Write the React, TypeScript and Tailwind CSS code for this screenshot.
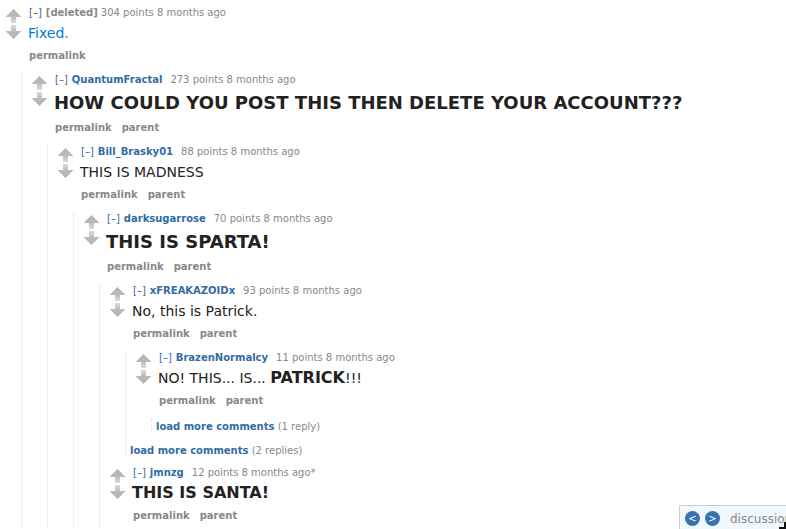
import React from "react";

type CommentProps = {
  author: string;
  meta: string;
  body: React.ReactNode;
  tall?: boolean;
  root?: boolean;
  children?: React.ReactNode;
};

function Arrow({ down = false }: { down?: boolean }) {
  const id = down ? "fade-down" : "fade-up";
  return (
    <svg width="15" height="14" viewBox="0 0 15 14" className={down ? "rotate-180" : ""} shapeRendering="crispEdges">
      <defs>
        <linearGradient id={id} x1="0" y1="0" x2="0" y2="1">
          <stop offset="0.5" stopColor="#b8b8b8" />
          <stop offset="1" stopColor="#dcdcdc" />
        </linearGradient>
      </defs>
      <path d="M7 0H8V1H9V2H10V3H11V4H12V5H13V6H14V7H15V8H10V14H5V8H0V7H1V6H2V5H3V4H4V3H5V2H6V1H7Z" fill={`url(#${id})`} />
    </svg>
  );
}

function Thread({ children }: { children: React.ReactNode }) {
  return <div className="mt-[11px] ml-[21px] border-l border-dotted border-[#ddddff] pl-1">{children}</div>;
}

function Comment({ author, meta, body, tall, root, children }: CommentProps) {
  return (
    <div>
      <div className="flex">
        <div className="ml-1.5 flex w-[15px] shrink-0 flex-col gap-0.5 pt-0.5">
          <Arrow />
          <Arrow down />
        </div>
        <div className="ml-[7px]">
          <div className="flex h-3 items-center pl-px leading-3 whitespace-pre text-[#888888]">
            <span className="text-[#336ba3]">[–]</span>
            <b className={root ? "ml-1" : "ml-1 text-[#336ba3]"}>{author}</b>
            <span className={root ? "ml-[3px]" : "ml-2"}>{meta}</span>
          </div>
          <div className={`whitespace-pre text-[#222222] ${tall ? "h-[34px] leading-[34px]" : "h-[29px] leading-7"}`}>{body}</div>
          <div className="flex h-[15px] gap-2.5 pl-px leading-4 font-bold text-[#888888]">
            <span>permalink</span>
            {!root && <span>parent</span>}
          </div>
        </div>
      </div>
      {children}
    </div>
  );
}

function LoadMore({ count }: { count: string }) {
  return (
    <div className="h-3.5 leading-4 whitespace-pre text-[#888888]">
      <b className="text-[#336ba3]">load more comments</b> {count}
    </div>
  );
}

export default function App() {
  return (
    <div className="relative h-[529px] w-[786px] overflow-hidden bg-white pt-[7px] font-['DejaVu_Sans',sans-serif] text-[10px]">
      <Comment root author="[deleted]" meta="304 points 8 months ago" body={<span className="text-[14px] text-[#0079d3]">Fixed.</span>}>
        <Thread>
          <Comment tall author="QuantumFractal" meta="273 points 8 months ago" body={<b className="text-[18px]">HOW COULD YOU POST THIS THEN DELETE YOUR ACCOUNT???</b>}>
            <Thread>
              <Comment author="Bill_Brasky01" meta="88 points 8 months ago" body={<span className="text-[14px]">THIS IS MADNESS</span>}>
                <Thread>
                  <Comment tall author="darksugarrose" meta="70 points 8 months ago" body={<b className="text-[18px]">THIS IS SPARTA!</b>}>
                    <Thread>
                      <Comment author="xFREAKAZOIDx" meta="93 points 8 months ago" body={<span className="text-[14px]">No, this is Patrick.</span>}>
                        <Thread>
                          <Comment
                            author="BrazenNormalcy"
                            meta="11 points 8 months ago"
                            body={<span className="text-[14px]">NO! THIS... IS... <b className="text-[16px]">PATRICK</b>!!!</span>}
                          >
                            <Thread>
                              <LoadMore count="(1 reply)" />
                            </Thread>
                          </Comment>
                          <div className="mt-2.5">
                            <LoadMore count="(2 replies)" />
                          </div>
                        </Thread>
                      </Comment>
                      <div className="mt-2.5 pb-[5px]">
                        <Comment author="jmnzg" meta="12 points 8 months ago*" body={<b className="text-[16px]">THIS IS SANTA!</b>} />
                      </div>
                    </Thread>
                  </Comment>
                </Thread>
              </Comment>
              <div className="h-5" />
            </Thread>
          </Comment>
        </Thread>
      </Comment>
      <div className="absolute top-[505px] left-[679px] flex h-[30px] w-[140px] border border-[#cccccc] bg-[#eff7ff] pt-[5px] pl-[5px] text-[12px] text-[#888888]">
        <span className="flex size-[15px] shrink-0 items-center justify-center rounded-full bg-[#3872af] text-[10px] text-white">&lt;</span>
        <span className="ml-[5px] flex size-[15px] shrink-0 items-center justify-center rounded-full bg-[#3872af] text-[10px] text-white">&gt;</span>
        <span className="ml-2.5 leading-4">discussions</span>
      </div>
      <svg className="absolute right-0 bottom-0" width="7" height="7" viewBox="0 0 7 7">
        <path d="M7 0V7H0V5H5V0Z" fill="#111111" />
      </svg>
    </div>
  );
}
